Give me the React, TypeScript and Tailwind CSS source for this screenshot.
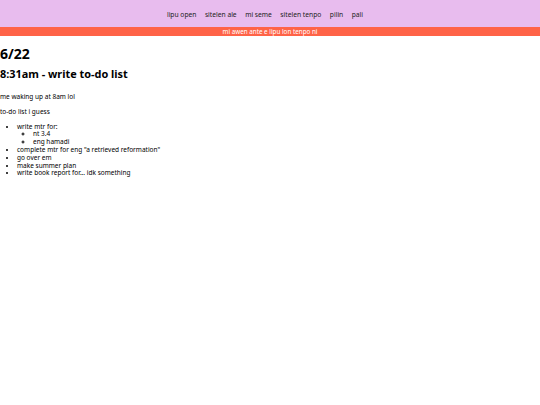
import React from "react";

export default function App() {
  const navItems = ["lipu open", "sitelen ale", "mi seme", "sitelen tenpo", "pilin", "pali"];
  return (
    <div className="min-h-[405px] w-[540px] bg-white text-black text-[6.5px] leading-[7.8px]" style={{ fontFamily: '"Noto Sans", sans-serif' }}>
      <nav className="flex h-[27px] items-center justify-center gap-[8.5px] bg-[#e8bcee] pt-[3px] pr-[10px]">
        {navItems.map((n) => (
          <span key={n} className="text-[6.7px] text-[#222]">{n}</span>
        ))}
      </nav>
      <div className="flex h-[9px] items-center justify-center bg-[#ff6347] text-[6.3px] text-white">
        mi awen ante e lipu lon tenpo ni
      </div>
      <main>
        <h1 className="mt-[8px] text-[14px] leading-[19px] font-bold">6/22</h1>
        <h2 className="mt-[4px] text-[10.9px] leading-[14px] font-bold">8:31am - write to-do list</h2>
        <p className="mt-[12px]">me waking up at 8am lol</p>
        <p className="mt-[7px]">to-do list i guess</p>
        <ul className="mt-[7px] list-disc pl-[17px]">
          <li>
            write mtr for:
            <ul className="list-[circle] pl-[16px]">
              <li>nt 3.4</li>
              <li>eng hamadi</li>
            </ul>
          </li>
          <li>complete mtr for eng "a retrieved reformation"</li>
          <li>go over em</li>
          <li>make summer plan</li>
          <li>write book report for... idk something</li>
        </ul>
      </main>
    </div>
  );
}
